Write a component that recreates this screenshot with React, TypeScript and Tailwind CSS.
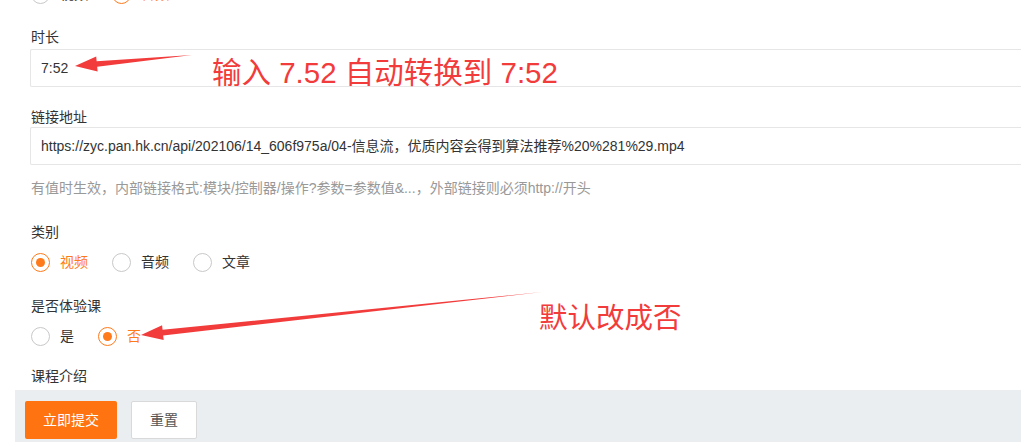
import React from 'react';

const font = "font-['Liberation_Sans','Noto_Sans_CJK_SC',sans-serif]";

const Radio: React.FC<{ label: string; checked?: boolean; className?: string }> = ({ label, checked, className }) => (
  <label className={`flex items-center gap-[10px] text-[14px] ${checked ? 'text-[#ff7a1a]' : 'text-[#333]'} ${className ?? ''}`}>
    <span className={`w-[19px] h-[19px] rounded-full border-[1.5px] flex items-center justify-center bg-white ${checked ? 'border-[#ff7a1a]' : 'border-[#c8c8c8]'}`}>
      {checked && <span className="w-[9px] h-[9px] rounded-full bg-[#ff7a1a]" />}
    </span>
    {label}
  </label>
);

const Label: React.FC<{ children: React.ReactNode; className?: string }> = ({ children, className }) => (
  <div className={`h-5 leading-5 text-[14px] text-[#333] ${className ?? ''}`}>{children}</div>
);

const Input: React.FC<{ value: string; className?: string }> = ({ value, className }) => (
  <div className={`h-[38px] border border-[#e6e6e6] border-r-0 rounded-l-[2px] bg-white flex items-center pl-[10px] text-[14px] text-[#333] whitespace-nowrap ${className ?? ''}`}>
    {value}
  </div>
);

const Arrow: React.FC<{ x1: number; y1: number; x2: number; y2: number }> = ({ x1, y1, x2, y2 }) => {
  // tapered arrow from tail (x1,y1) to head (x2,y2)
  const dx = x2 - x1;
  const dy = y2 - y1;
  const len = Math.hypot(dx, dy);
  const ux = dx / len;
  const uy = dy / len;
  const nx = -uy;
  const ny = ux;
  const headLen = 22;
  const bx = x2 - ux * headLen;
  const by = y2 - uy * headLen;
  const pts = [
    [x1, y1],
    [bx + nx * 2.8, by + ny * 2.8],
    [bx + nx * 7.5, by + ny * 7.5],
    [x2, y2],
    [bx - nx * 7.5, by - ny * 7.5],
    [bx - nx * 2.8, by - ny * 2.8],
  ]
    .map((p) => p.join(','))
    .join(' ');
  return <polygon points={pts} fill="#f23b3b" />;
};

export default function App() {
  return (
    <div className={`relative w-[1021px] h-[442px] overflow-hidden bg-white ${font}`}>
      <div className="pl-[15px]">
        <div className="pl-[16px]">
          <div className="flex items-center -mt-[15px] h-[19px]">
            <Radio label="视频" />
            <Radio label="音频" checked className="ml-[24px]" />
          </div>
          <Label className="mt-[23px]">时长</Label>
        </div>
        <div className="pl-[15px]">
          <Input value="7:52" className="mt-[2px]" />
          <Label className="mt-[20px] pl-[1px]">链接地址</Label>
          <Input value="https://zyc.pan.hk.cn/api/202106/14_606f975a/04-信息流，优质内容会得到算法推荐%20%281%29.mp4" />
          <div className="mt-[13px] h-5 leading-5 text-[14px] text-[#999] pl-[1px] whitespace-nowrap">
            有值时生效，内部链接格式:模块/控制器/操作?参数=参数值&...，外部链接则必须http://开头
          </div>
          <Label className="mt-[24px] pl-[1px]">类别</Label>
          <div className="flex items-center mt-[11px] h-[19px] pl-[1px]">
            <Radio label="视频" checked />
            <Radio label="音频" className="ml-[24px]" />
            <Radio label="文章" className="ml-[24px]" />
          </div>
          <Label className="mt-[24px] pl-[1px]">是否体验课</Label>
          <div className="flex items-center mt-[11px] h-[19px] pl-[1px]">
            <Radio label="是" />
            <Radio label="否" checked className="ml-[24px]" />
          </div>
          <Label className="mt-[20px] pl-[1px]">课程介绍</Label>
        </div>
        <div className="mt-[4px] h-[60px] bg-[#ebeef0] flex items-start pt-[11px] pl-[10px] gap-[14px]">
          <button className="h-[38px] w-[92px] rounded-[2px] bg-[#ff7310] text-white text-[14px]">立即提交</button>
          <button className="h-[38px] w-[66px] rounded-[2px] bg-white border border-[#d9d9d9] text-[#555] text-[14px]">重置</button>
        </div>
      </div>

      <svg className="absolute left-0 top-0 pointer-events-none" width="1021" height="442">
        <Arrow x1={192} y1={55} x2={75} y2={66} />
        <Arrow x1={542} y1={292} x2={141} y2={335} />
      </svg>
      <div className="absolute left-[212px] top-[56px] text-[29.5px] leading-[34px] text-[#f23b3b] whitespace-nowrap">
        输入 7.52 自动转换到 7:52
      </div>
      <div className="absolute left-[539px] top-[301px] text-[28.5px] leading-[34px] text-[#f23b3b] whitespace-nowrap">
        默认改成否
      </div>
    </div>
  );
}
